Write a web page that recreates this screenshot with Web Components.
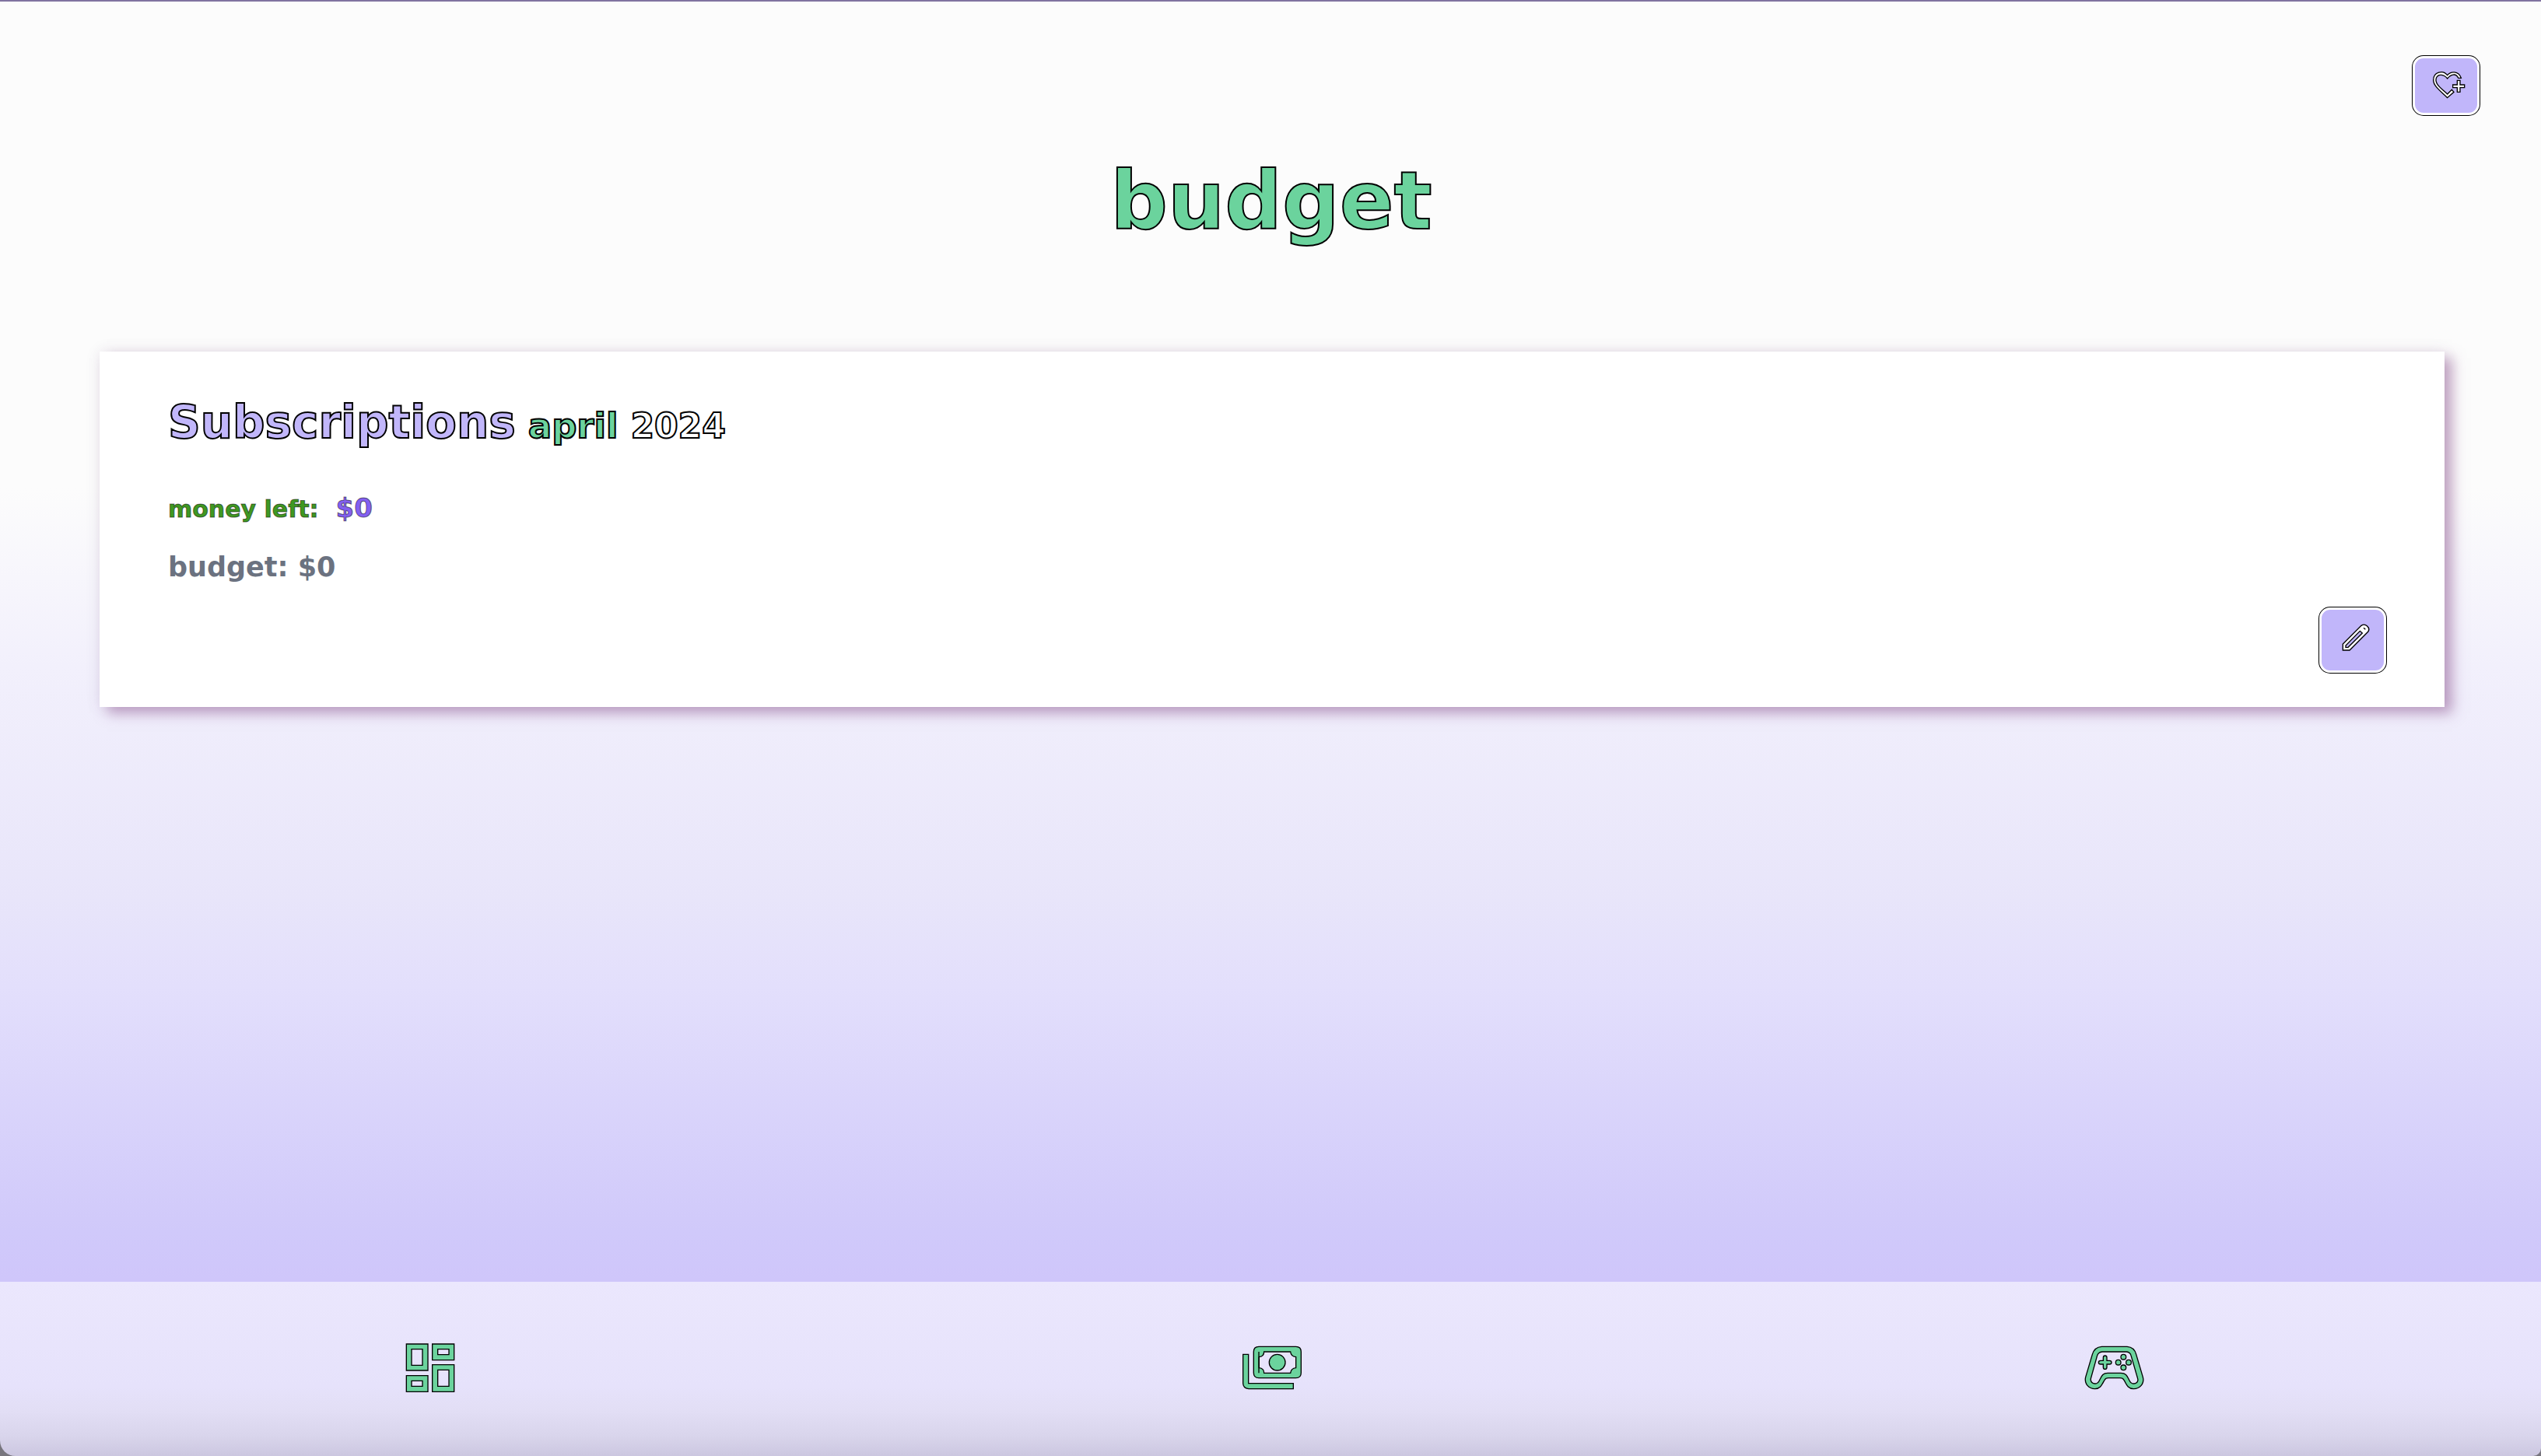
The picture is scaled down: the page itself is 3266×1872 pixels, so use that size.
<!DOCTYPE html>
<html lang="en">
<head>
<meta charset="utf-8">
<title>budget</title>
<style>
html{height:100%;background:#77757d}
body{margin:0;min-height:100%;display:flex;font-family:"DejaVu Sans",sans-serif;font-weight:700;color:#000}
budget-app{flex:1}
</style>
</head>
<body>
<budget-app></budget-app>
<script>
const define = (name, html) => customElements.define(name, class extends HTMLElement {
  constructor() {
    super();
    const t = document.createElement('template');
    t.innerHTML = html;
    this.attachShadow({mode: 'open'}).append(t.content.cloneNode(true));
  }
});

define('icon-button', `
<style>
:host{display:block}
button{display:flex;align-items:center;justify-content:center;box-sizing:border-box;width:86px;height:var(--button-height,76px);margin:1px;padding:0;border:3px solid #fff;border-radius:14px;background:#c1b6fa;box-shadow:0 0 0 1px #000;cursor:pointer}
</style>
<button><slot></slot></button>`);

customElements.define('nav-link', class extends HTMLElement {
  connectedCallback() {
    const root = this.attachShadow({mode: 'open'});
    root.innerHTML = `<style>:host{display:flex;justify-content:center}a{display:block}</style><a><slot></slot></a>`;
    const a = root.querySelector('a');
    a.href = this.getAttribute('href');
    a.setAttribute('aria-label', this.getAttribute('label'));
  }
});

define('budget-nav', `
<style>
:host{display:block;background:linear-gradient(#ebe7fd 0,#e6e2fb 60%,#e2def5 74%,#d9d5ec 88%,#ccc7e0 100%);border-radius:0 0 10px 20px}
nav{display:grid;grid-template-columns:repeat(3,1fr);padding:70px 8px 74px 12px}
svg{display:block;width:80px;height:80px;fill:#6bd39d;stroke:#000;stroke-width:4}
</style>
<nav>
<nav-link href="#dashboard" label="Dashboard"><svg viewBox="38 54 240 240" fill-rule="evenodd"><path d="M66 84H149V186H66ZM86 104V166H128V104ZM166 84H250V146H166ZM187 104V125H230V104ZM66 206H149V268H66ZM86 226V247H128V226ZM166 164H250V268H166ZM187 184V247H230V184Z"/></svg></nav-link>
<nav-link href="#budget" label="Budget"><svg viewBox="45 24 240 240" fill-rule="evenodd"><path d="M53 94H74V206H247V227H75Q53 225 53 205Z"/><path d="M114 64H257Q277 64 277 84V165Q277 185 257 185H114Q94 185 94 165V84Q94 64 114 64ZM134 84Q134 102 115 104V146Q134 148 134 166H236Q238 148 257 146V104Q238 102 236 84Z"/><path d="M114 84V166" fill="none"/><circle cx="185" cy="125" r="31"/></svg></nav-link>
<nav-link href="#games" label="Games"><svg viewBox="51 24 240 240" fill-rule="evenodd"><path d="M124 64H222Q250 66 257 94L283 182C290 208 270 227 247 227C222 226 219 207 210 193Q206 185 195 185H150Q139 185 135 193C126 207 122 226 98 227C75 227 56 208 62 182L88 94Q96 66 124 64ZM126 84Q111 86 107 98L82 188C80 199 88 207 99 207C109 207 113 200 117 191C124 177 128 166 147 166H198C218 166 222 177 229 191C233 200 237 207 247 207C258 207 266 199 263 188L237 98Q234 86 220 84Z"/><path d="M130 107Q130 99 137 99Q144 99 144 107V118H154Q162 118 162 125Q162 132 154 132H144V143Q144 151 137 151Q130 151 130 143V132H120Q112 132 112 125Q112 118 120 118H130Z"/><circle cx="208" cy="104" r="10"/><circle cx="188" cy="125" r="10"/><circle cx="228" cy="125" r="10"/><circle cx="208" cy="145" r="10"/></svg></nav-link>
</nav>`);

define('subscription-card', `
<style>
:host{display:flex;justify-content:space-between;background:#fff;padding:58px 74px 43px 88px;box-shadow:10px 8px 16px rgba(140,82,142,.5),0 0 18px rgba(100,80,120,.1)}
.edit{align-self:flex-end;--button-height:84px}
h2{display:flex;align-items:baseline;gap:16px;margin:0;font-size:58px;line-height:66px;color:#c1b6fa;-webkit-text-stroke:2px #000}
.month{font-size:45px;color:#6bd39d}
.year{font-size:44px;color:#fff}
p{margin:0}
.left{display:flex;align-items:baseline;gap:22px;margin-top:52px;font-size:30px;line-height:40px;color:#3f9822;-webkit-text-stroke:1px rgba(0,0,0,.5)}
.left b{font-size:34px;color:#8360f0}
.total{margin-top:34px;font-size:35px;line-height:40px;color:#6b7280}
svg{display:block;width:60px;height:60px;fill:#fff;stroke:#000;stroke-width:4}
.body{padding-bottom:117px}
</style>
<div class="body">
<h2>Subscriptions <span class="month">april</span> <span class="year">2024</span></h2>
<p class="left">money left: <b>$0</b></p>
<p class="total">budget: $0</p>
</div>
<icon-button class="edit"><svg viewBox="100 98 180 180" fill-rule="evenodd" aria-label="Edit"><path d="M152 203L223 132Q235 124 246 134Q257 145 249 156L178 227H152ZM163 209V216H172L227 161L218 153Z"/><path d="M232 141L239 147" fill="none"/></svg></icon-button>`);

define('budget-app', `
<style>
:host{display:flex;flex-direction:column;border-top:2px solid #8073a0}
main{flex:1;background:linear-gradient(#fcfcfc 0,#fcfcfc 38%,#f2f0fc 52%,#e8e5fa 70%,#e3dffc 77%,#d0c9fa 96%,#cfc6fa 100%)}
header{display:flex;justify-content:flex-end;padding:69px 78px 0 0}
h1{margin:0;padding:49px 0 134px 2px;text-align:center;font-size:103px;line-height:120px;color:#6bd39d;-webkit-text-stroke:2px #000}
subscription-card{margin:0 124px 0 128px}
svg{display:block;width:60px;height:60px;fill:#fff;stroke:#000;stroke-width:4}
</style>
<main>
<header><icon-button><svg viewBox="102 91 180 180" fill-rule="evenodd" aria-label="Add favourite"><path d="M197 141C210 125 240 123 250 152H239C230 131 210 138 197 154C184 138 162 134 154 152C147 177 178 195 197 214L214 197L222 206L197 228C177 207 143 185 143 160C143 129 180 119 197 141Z"/><path d="M235 161H246V178H263V189H246V206H235V189H218V178H235Z"/></svg></icon-button></header>
<h1>budget</h1>
<subscription-card></subscription-card>
</main>
<budget-nav></budget-nav>`);
</script>
</body>
</html>
